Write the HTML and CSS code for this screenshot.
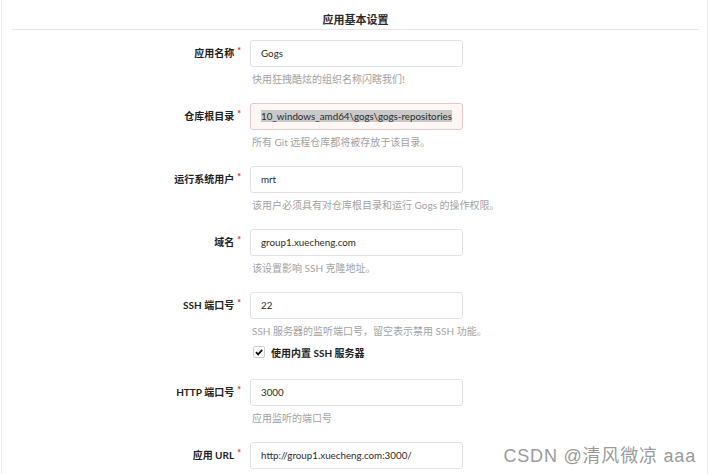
FILE: index.html
```html
<!DOCTYPE html>
<html lang="zh-CN">
<head>
<meta charset="utf-8">
<title>应用基本设置</title>
<link rel="stylesheet" href="styles.css">
</head>
<body>
<div class="panel">
  <h4 class="header">应用基本设置</h4>
  <div class="form">
    <div class="row">
      <div class="field">
        <label class="label">应用名称<span class="req">*</span></label>
        <div class="input">Gogs</div>
      </div>
      <div class="help">快用狂拽酷炫的组织名称闪瞎我们!</div>
    </div>
    <div class="row">
      <div class="field">
        <label class="label">仓库根目录<span class="req">*</span></label>
        <div class="input error"><span class="sel">10_windows_amd64\gogs\gogs-repositories</span></div>
      </div>
      <div class="help">所有 Git 远程仓库都将被存放于该目录。</div>
    </div>
    <div class="row">
      <div class="field">
        <label class="label">运行系统用户<span class="req">*</span></label>
        <div class="input">mrt</div>
      </div>
      <div class="help">该用户必须具有对仓库根目录和运行 Gogs 的操作权限。</div>
    </div>
    <div class="row">
      <div class="field">
        <label class="label">域名<span class="req">*</span></label>
        <div class="input">group1.xuecheng.com</div>
      </div>
      <div class="help">该设置影响 SSH 克隆地址。</div>
    </div>
    <div class="row row-check">
      <div class="field">
        <label class="label">SSH 端口号<span class="req">*</span></label>
        <div class="input">22</div>
      </div>
      <div class="help">SSH 服务器的监听端口号，留空表示禁用 SSH 功能。</div>
      <div class="check">
        <span class="box"><svg viewBox="0 0 12 12" width="12" height="12"><path d="M2.4 6.2 L5 8.8 L9.8 3.4" fill="none" stroke="#111" stroke-width="2.2"/></svg></span>
        <span class="check-text">使用内置 SSH 服务器</span>
      </div>
    </div>
    <div class="row">
      <div class="field">
        <label class="label">HTTP 端口号<span class="req">*</span></label>
        <div class="input">3000</div>
      </div>
      <div class="help">应用监听的端口号</div>
    </div>
    <div class="row">
      <div class="field">
        <label class="label">应用 URL<span class="req">*</span></label>
        <div class="input">http://group1.xuecheng.com:3000/</div>
      </div>
    </div>
  </div>
  <div class="watermark">CSDN @清风微凉 aaa</div>
</div>
</body>
</html>
```
FILE: styles.css
```css
html, body {
  margin: 0;
  padding: 0;
  background: #fff;
}
body {
  font-family: "Lato", "Noto Sans CJK SC", sans-serif;
  color: #333;
  overflow: hidden;
}
.panel {
  position: relative;
  margin: 0 1px;
  height: 474px;
  border-left: 1px solid #ececec;
  border-right: 1px solid #ececec;
  box-sizing: border-box;
}
.header {
  margin: 0 8px 0 10px;
  padding: 12px 0 1px;
  font-size: 11px;
  line-height: 16px;
  font-weight: 700;
  text-align: center;
  color: #2b2b2b;
  border-bottom: 1px solid #e6e6e6;
}
.form {
  padding-top: 10px;
}
.row {
  margin-bottom: 16px;
}
.row-check {
  margin-bottom: 19px;
}
.field {
  display: flex;
  align-items: center;
  gap: 9px;
}
.label {
  width: 239px;
  text-align: right;
  font-size: 10px;
  font-weight: 700;
  color: #222;
  line-height: 27px;
}
.req {
  color: #db2828;
  font-size: 9px;
  margin-left: 3px;
  vertical-align: 3px;
  line-height: 0;
}
.input {
  box-sizing: border-box;
  width: 213px;
  height: 27px;
  border: 1px solid #e2e2e2;
  border-radius: 3px;
  padding: 0 0 0 10px;
  font-size: 9.8px;
  line-height: 25px;
  color: #2a2a2a;
  white-space: nowrap;
  overflow: hidden;
}
.input.error {
  background: #fff6f6;
  border-color: #edc6c6;
}
.sel {
  background: #c9c9c9;
}
.help {
  margin: 4px 0 0 250px;
  font-size: 10px;
  line-height: 16px;
  color: #a2a2a2;
}
.check {
  margin: 5px 0 0 251px;
  display: flex;
  align-items: center;
  gap: 6px;
  height: 16px;
}
.box {
  box-sizing: border-box;
  width: 12px;
  height: 12px;
  border: 1px solid #cfcfcf;
  border-radius: 2px;
  display: flex;
  align-items: center;
  justify-content: center;
}
.box svg {
  display: block;
  width: 10px;
  height: 10px;
}
.check-text {
  font-size: 10px;
  font-weight: 700;
  color: #222;
}
.watermark {
  position: absolute;
  right: 11px;
  top: 444px;
  font-family: "Liberation Sans", "Noto Sans CJK SC", sans-serif;
  font-size: 18px;
  line-height: 24px;
  color: #9a9a9a;
  letter-spacing: 0.8px;
  text-shadow: 0 0 1px #fff;
}
```
